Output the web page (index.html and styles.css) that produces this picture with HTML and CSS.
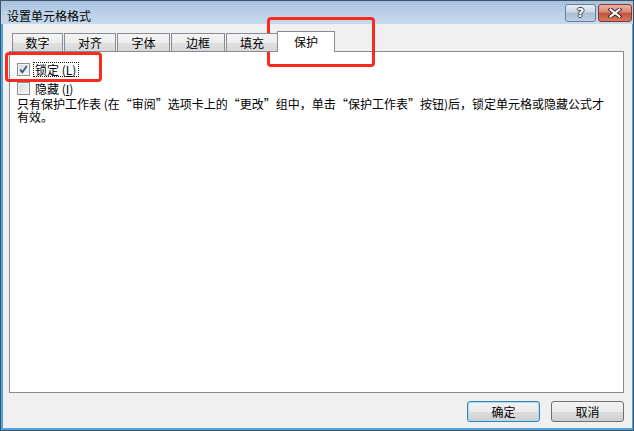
FILE: index.html
```html
<!DOCTYPE html>
<html lang="zh-CN">
<head>
<meta charset="utf-8">
<title>设置单元格格式</title>
<link rel="stylesheet" href="styles.css">
</head>
<body>
<div class="window">
  <div class="titlebar">
    <span class="title">设置单元格格式</span>
    <div class="caption-buttons">
      <button class="cap help">?</button>
      <button class="cap close">
        <svg width="14" height="10" viewBox="0 0 14 10">
          <path d="M2.5 1.5 L11.5 8.5 M11.5 1.5 L2.5 8.5" stroke="#3b2a26" stroke-width="4" stroke-linecap="square"/>
          <path d="M2.5 1.5 L11.5 8.5 M11.5 1.5 L2.5 8.5" stroke="#ffffff" stroke-width="2" stroke-linecap="square"/>
        </svg>
      </button>
    </div>
  </div>
  <div class="body">
    <div class="tabs">
      <div class="tab">数字</div>
      <div class="tab">对齐</div>
      <div class="tab">字体</div>
      <div class="tab">边框</div>
      <div class="tab">填充</div>
      <div class="tab active">保护</div>
    </div>
    <div class="panel">
      <div class="option first">
        <span class="checkbox">
          <svg width="11" height="11" viewBox="0 0 11 11">
            <path d="M2.2 5.6 L4.4 8.2 L8.8 2" fill="none" stroke="#3c5594" stroke-width="1.8"/>
          </svg>
        </span>
        <span class="label focus">锁定 (<span class="u">L</span>)</span>
      </div>
      <div class="option">
        <span class="checkbox"></span>
        <span class="label">隐藏 (<span class="u">I</span>)</span>
      </div>
      <p class="note">只有保护工作表 (在<span class="q">“</span>审阅<span class="q">”</span>选项卡上的<span class="q">“</span>更改<span class="q">”</span>组中，单击<span class="q">“</span>保护工作表<span class="q">”</span>按钮)后，锁定单元格或隐藏公式才有效。</p>
    </div>
    <div class="actions">
      <button class="btn default">确定</button>
      <button class="btn">取消</button>
    </div>
  </div>
  <div class="mark mark-tab"></div>
  <div class="mark mark-lock"></div>
</div>
</body>
</html>
```
FILE: styles.css
```css
html, body {
  margin: 0;
  padding: 0;
  background: #f0f0f0;
}

.window {
  position: relative;
  width: 634px;
  height: 431px;
  box-sizing: border-box;
  border: 1px solid #3f5369;
  display: flex;
  flex-direction: column;
  font: 12px "Noto Sans CJK SC", sans-serif;
  color: #000;
  background: #f0f0f0;
  text-spacing-trim: space-all;
}

.titlebar {
  height: 23px;
  flex: none;
  display: flex;
  justify-content: space-between;
  align-items: flex-start;
  padding: 0 1px 0 6px;
  background: linear-gradient(#a8c1dc, #bcd2e8 55%, #c6d9ed);
}

.title {
  margin-top: 8px;
  line-height: 13px;
}

.caption-buttons {
  display: flex;
  gap: 2px;
  margin-top: 3px;
}

.cap {
  height: 18px;
  box-sizing: border-box;
  border: 1px solid;
  border-radius: 3px;
  padding: 0;
  margin: 0;
  display: flex;
  align-items: center;
  justify-content: center;
}

.help {
  width: 31px;
  border-color: #6b7f96;
  background: linear-gradient(#e8eff7, #c9d7e6 45%, #a9bed5 50%, #bccee2);
  color: #fff;
  font: bold 13px "DejaVu Sans", sans-serif;
  line-height: 16px;
  text-shadow: 1px 0 0 #3a4656, -1px 0 0 #3a4656, 0 1px 0 #3a4656, 0 -1px 0 #3a4656;
}

.close {
  width: 34px;
  border-color: #853a2d;
  background: linear-gradient(#ebb3a5, #d88673 45%, #c5503a 50%, #d57a60);
}

.body {
  flex: 1;
  display: flex;
  flex-direction: column;
  padding: 7px 8px 6px 6px;
  border-left: 2px solid #4fa6df;
  border-right: 1px solid #4fa6df;
  border-bottom: 2px solid #4fa6df;
}

.tabs {
  position: relative;
  z-index: 1;
  display: flex;
  align-items: flex-end;
  gap: 1px;
  height: 21px;
  padding-left: 3px;
  margin-bottom: -1px;
}

.tab {
  height: 19px;
  box-sizing: border-box;
  border: 1px solid #898c95;
  display: flex;
  align-items: center;
  justify-content: center;
  line-height: 13px;
  background: linear-gradient(#f4f4f4, #ededed 50%, #e0e0e0 52%, #d8d8d8);
}

.tab:nth-child(1) { width: 51px; }
.tab:nth-child(2) { width: 52px; }
.tab:nth-child(3) { width: 53px; }
.tab:nth-child(4) { width: 54px; }
.tab:nth-child(5) { width: 52px; }

.tab.active {
  width: 58px;
  height: 21px;
  margin-left: -2px;
  padding-bottom: 1px;
  border-bottom: none;
  background: #fff;
}

.panel {
  flex: 1;
  background: #fff;
  border: 1px solid #898c95;
  padding: 10px 7px 0 7px;
}

.option {
  display: flex;
  align-items: center;
  height: 15px;
}

.option.first {
  margin-bottom: 4px;
}

.checkbox {
  width: 13px;
  height: 13px;
  box-sizing: border-box;
  border: 1px solid #8e8f8f;
  background: linear-gradient(135deg, #d6d8db, #f8f8f8);
  box-shadow: inset 0 0 0 1px #f4f4f4;
  margin-right: 3px;
  display: flex;
  align-items: center;
  justify-content: center;
}

.label {
  border: 1px dotted transparent;
  padding: 0 2px 0 1px;
  line-height: 13px;
}

.label.focus {
  border-color: #222;
}

.u {
  text-decoration: underline;
}

.note {
  margin: 1px 0 0;
  width: 596px;
  line-height: 13px;
}

.q {
  font-feature-settings: "fwid" 1;
}

.actions {
  display: flex;
  justify-content: flex-end;
  gap: 11px;
  margin-top: 8px;
}

.btn {
  width: 73px;
  height: 21px;
  box-sizing: border-box;
  border: 1px solid #707070;
  border-radius: 3px;
  padding: 0;
  margin: 0;
  font: 12px "Noto Sans CJK SC", sans-serif;
  color: #000;
  background: linear-gradient(#f2f2f2, #ebebeb 50%, #dddddd 51%, #cfcfcf);
}

.btn.default {
  border-color: #3c7fb1;
  box-shadow: inset 0 0 0 1px #9ee3f7;
}

.mark {
  position: absolute;
  box-sizing: border-box;
  border: 3px solid #fb2a1e;
  border-radius: 4px;
  pointer-events: none;
}

.mark-tab {
  left: 266px;
  top: 16px;
  width: 108px;
  height: 50px;
}

.mark-lock {
  left: 4px;
  top: 51px;
  width: 97px;
  height: 30px;
}
```
